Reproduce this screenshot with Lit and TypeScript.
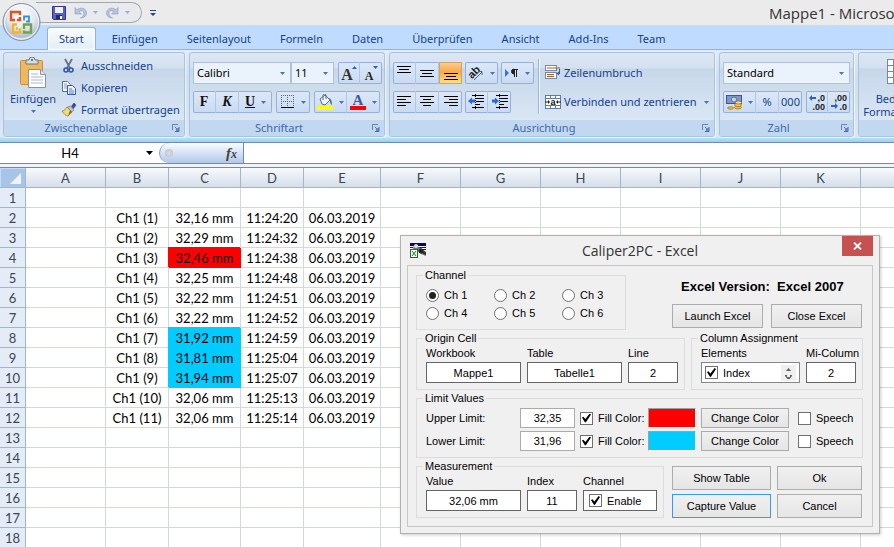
import { LitElement, html, svg, css, nothing, TemplateResult } from "lit";
import { customElement, property } from "lit/decorators.js";
import { classMap } from "lit/directives/class-map.js";

/* ---------- icon drawings ---------- */

const icon = (w: number, h: number, body: unknown) =>
  html`<svg width=${w} height=${h} viewBox="0 0 ${w} ${h}" aria-hidden="true">${body}</svg>`;

const lines = (rows: number[][], width = 16, height = 16) =>
  icon(width, height, rows.map(([x, y, w]) => svg`<rect x=${x} y=${y} width=${w} height="1" fill="#000"/>`));

const arrow = html`<svg class="arrow" width="5" height="3" viewBox="0 0 5 3" aria-hidden="true"><path d="M0 0h5L2.5 3z" fill="#4a74ad"/></svg>`;

const orb = icon(42, 42, svg`
  <defs>
    <radialGradient id="orb" cx="50%" cy="30%" r="75%">
      <stop offset="0" stop-color="#fff"/><stop offset=".5" stop-color="#e3e7ee"/><stop offset=".8" stop-color="#b4bfd0"/><stop offset="1" stop-color="#f4f8fc"/>
    </radialGradient>
  </defs>
  <circle cx="21.500" cy="22" r="18.500" fill="url(#orb)" stroke="#7d8ba3" stroke-width="1"/>
  <circle cx="21.500" cy="22" r="17" fill="none" stroke="#fff" stroke-opacity=".8"/>
  <g fill="none" stroke-width="2.400">
    <path d="M15 20h-4v-8h9v3M20 17v3h-3" stroke="#e2521a"/>
    <path d="M24 20.500v-4h5v5h-3" stroke="#3f8fd4" stroke-width="1.800"/>
    <path d="M17 24.500h-4v8h7v-4M16 28.500h2" stroke="#f5b51e"/>
    <path d="M24 29v-4.500h7v8h-7v-2" stroke="#6aa93c"/>
  </g>`);

const save = icon(14, 14, svg`
  <path d="M.5.5h13v13h-12l-1-1z" fill="#5a5fc4" stroke="#33348e"/>
  <rect x="3" y="1" width="8" height="6" fill="#eef0ff"/>
  <rect x="4" y="9" width="6" height="4" fill="#26276e"/><rect x="8" y="10" width="2" height="3" fill="#fff"/>`);

const undo = icon(13, 13, svg`<path d="M1 1.500v6.500h6.500L5 5.700c3-2 5-1 5 1.800 0 2-1.500 3.500-3.500 4.500 3.500 0 6-2 6-5C12.500 2.500 7 .5 3 3.700z" fill="#b9c4d9" stroke="#93a4c4" stroke-width=".7"/>`);
const redo = icon(13, 13, svg`<path d="M12 1.500v6.500H5.500L8 5.700c-3-2-5-1-5 1.800 0 2 1.500 3.500 3.500 4.500-3.500 0-6-2-6-5C.5 2.500 6 .5 10 3.700z" fill="#b9c4d9" stroke="#93a4c4" stroke-width=".7"/>`);
const customise = icon(6, 6, svg`<path d="M0 0h6v1H0zM0 3h6L3 6z" fill="#24468b"/>`);

const paste = icon(28, 32, svg`
  <rect x="1.500" y="3.500" width="22" height="24" rx="1" fill="#eeb95c" stroke="#c98f35"/>
  <path d="M7 3h3a3 3 0 0 1 6 0h3v4H7z" fill="#d9dde3" stroke="#6d7480"/>
  <circle cx="13" cy="3" r="1" fill="#555"/>
  <path d="M9.500 12.500h12l5 5v13h-17z" fill="#fff" stroke="#8291ad"/>
  <path d="M21.500 12.500v5h5" fill="#dce5f3" stroke="#8291ad"/>
  <path d="M12 17h7M12 20h12M12 23h12M12 26h12" stroke="#a9b7d1"/>`);

const cut = icon(16, 16, svg`
  <path d="M4 1l5 9M11 1L6 10" stroke="#62748f" stroke-width="1.800" fill="none"/>
  <circle cx="5" cy="12" r="2" fill="none" stroke="#2d56a8" stroke-width="1.600"/>
  <circle cx="10" cy="12" r="2" fill="none" stroke="#2d56a8" stroke-width="1.600"/>`);

const copy = icon(16, 16, svg`
  <path d="M1.500 1.500h5l3 3v7h-8z" fill="#fff" stroke="#4e6fae"/>
  <path d="M3 4h3M3 6h4M3 8h4" stroke="#7394cf"/>
  <path d="M6.500 5.500h5l3 3v6h-8z" fill="#e6efff" stroke="#3a5b9f"/>
  <path d="M8 9h3M8 11h5M8 13h5" stroke="#5b80c4"/>`);

const brush = icon(16, 16, svg`
  <path d="M10 5l3-4 2 2-3 4z" fill="#3b4d94" stroke="#2b376f" stroke-width=".6"/>
  <path d="M6 5l4-1 3 4-2 2z" fill="#b8c2d4" stroke="#6a7690" stroke-width=".6"/>
  <path d="M6 5l5 5-4 4c-2 0-4-2-6-5 2 0 4-2 5-4z" fill="#eddc7c" stroke="#9d7b21" stroke-width=".8"/>
  <path d="M7 14l4-4-2-2z" fill="#9b6a1d"/>`);

const launcher = icon(8, 8, svg`
  <path d="M.5 6V.5H6" fill="none" stroke="#6785b5"/><path d="M3 3l3 3M7 3v4.500H3" fill="none" stroke="#4a6ba3"/><rect x="4" y="4" width="3" height="3" fill="#6785b5"/>`);

const borders = icon(14, 14, svg`
  <path d="M0 .5h13M0 6.500h13M.5 0v12M6.500 0v12M12.500 0v12" stroke="#5b6270" stroke-dasharray="1 1"/><path d="M0 12.500h13" stroke="#000"/>`);

const fill = icon(16, 16, svg`
  <path d="M3 5l5-4 5 5-5 5-3-1z" fill="#f0f3f8" stroke="#566b8f"/>
  <path d="M6 6V1.500a1.500 1.500 0 0 1 3 0V5" fill="none" stroke="#566b8f"/>
  <path d="M11 4c3 0 4 3 4 7-2-1-2-3-2-5z" fill="#3d6cb3"/>
  <rect x="0" y="12" width="16" height="4" fill="#ff0"/>`);

const fontColor = icon(16, 16, svg`
  <text x="8" y="11" text-anchor="middle" font-family="Liberation Serif, serif" font-weight="700" font-size="15" fill="#3c5c9c">A</text>
  <rect x="0" y="12" width="16" height="4" fill="red"/>`);

const grow = icon(18, 18, svg`
  <text x="7" y="16" text-anchor="middle" font-family="Liberation Serif, serif" font-weight="700" font-size="16" fill="#333">A</text>
  <path d="M12 5l2.500-3L17 5z" fill="#2f5fb3"/>`);
const shrink = icon(18, 18, svg`
  <text x="7" y="16" text-anchor="middle" font-family="Liberation Serif, serif" font-weight="700" font-size="12" fill="#222">A</text>
  <path d="M11 2h5l-2.500 3z" fill="#2f5fb3"/>`);

const orient = icon(16, 16, svg`
  <text x="0" y="11" transform="rotate(-45 6 8)" font-family="Liberation Sans, sans-serif" font-weight="700" font-size="11" fill="#222">ab</text>
  <path d="M6 15l8-8M14 10V6.500h-3.500" fill="none" stroke="#5a6474"/>`);
const direction = icon(14, 12, svg`
  <path d="M0 2l4 4-4 4z" fill="#3b74d8"/>
  <path d="M8 2.500h5M9.500 2v8M11.500 2v8" stroke="#222"/><path d="M9 2a2.500 2.500 0 0 0 0 5z" fill="#222" stroke="#222"/>`);

const outdent = icon(16, 16, svg`
  <path d="M4 1.500h12M8 4.500h8M8 7.500h8M8 10.500h4M4 13.500h12" stroke="#000"/><path d="M7.500 0v16" stroke="#000" stroke-dasharray="1 1"/>
  <path d="M0 7l4-3.500v2h3v3H4v2z" fill="#2f69d0"/>`);
const indent = icon(16, 16, svg`
  <path d="M4 1.500h12M8 4.500h8M8 7.500h8M8 10.500h4M4 13.500h12" stroke="#000"/><path d="M7.500 0v16" stroke="#000" stroke-dasharray="1 1"/>
  <path d="M7 7L3 3.500v2H0v3h3v2z" fill="#2f69d0"/>`);

const wrap = icon(16, 16, svg`
  <rect x=".5" y=".5" width="11" height="5" fill="#fff" stroke="#7787a6"/>
  <rect x=".5" y="7.500" width="11" height="6" fill="#fff" stroke="#7787a6"/>
  <path d="M2 3h13M2 9.500h7M2 11.500h7" stroke="#a0612c"/>
  <path d="M14.500 4v4" stroke="#3a5f9f"/><path d="M12 8.500h3" stroke="#3a5f9f"/><path d="M14 6.500v4l-2.500-2z" fill="#3a5f9f"/>`);
const merge = icon(16, 16, svg`
  <rect x=".5" y="1.500" width="15" height="13" fill="#fff" stroke="#5f7aa8"/>
  <path d="M1 4.500h14M1 11.500h14M5.500 2v3M10.500 2v3M5.500 12v3M10.500 12v3" stroke="#5f7aa8"/>
  <path d="M0 8h4M12 8h4" stroke="#222"/><path d="M3 6l2 2-2 2zM13 6l-2 2 2 2z" fill="#222"/>
  <text x="8" y="11" text-anchor="middle" font-family="Liberation Sans, sans-serif" font-weight="700" font-size="9" fill="#111">a</text>`);

const money = icon(16, 16, svg`
  <rect x=".5" y="1.500" width="15" height="8" fill="#7f97c6" stroke="#3c578f"/>
  <circle cx="8" cy="5.500" r="2.500" fill="#c5d2ec" stroke="#3c578f" stroke-width=".7"/>
  <ellipse cx="12" cy="13.500" rx="3.500" ry="1.500" fill="#f3bb3b" stroke="#9b6a12" stroke-width=".7"/>
  <ellipse cx="12" cy="11" rx="3.500" ry="1.500" fill="#f9cf62" stroke="#9b6a12" stroke-width=".7"/>
  <ellipse cx="12.500" cy="8.500" rx="3" ry="1.500" fill="#fbdc83" stroke="#9b6a12" stroke-width=".7"/>
  <ellipse cx="4.500" cy="14" rx="3" ry="1.300" fill="#f3bb3b" stroke="#9b6a12" stroke-width=".7"/>`);

const decimals = (top: string, bottom: string, more: boolean) => icon(16, 16, svg`
  <text x="16" y="7" text-anchor="end" font-family="Liberation Sans, sans-serif" font-weight="700" font-size="9" fill="#222">${top}</text>
  <text x="16" y="16" text-anchor="end" font-family="Liberation Sans, sans-serif" font-weight="700" font-size="9" fill="#222">${bottom}</text>
  ${more
    ? svg`<path d="M0 4l3-3v2h4v2H3v2z" fill="#2f5fc0"/>`
    : svg`<path d="M7 12L4 9v2H0v2h4v2z" fill="#2f5fc0"/>`}`);

const condFormat = icon(24, 26, svg`
  <rect x=".5" y=".5" width="23" height="24" fill="#fff" stroke="#7686a8"/>
  <path d="M1 6.500h22M1 12.500h22M1 18.500h22M6.500 0v24" stroke="#7686a8"/>
  <rect x="7" y="1" width="10" height="5" fill="#d9483b"/><rect x="7" y="7" width="7" height="5" fill="#4c74cf"/>
  <rect x="7" y="13" width="10" height="5" fill="#d9483b"/><rect x="7" y="19" width="5" height="5" fill="#4c74cf"/>`);

const caliper = icon(16, 15, svg`
  <rect width="16" height="3" fill="#06066e"/><rect y="3" width="16" height="8" fill="#f4f4f4"/>
  <path d="M8 4.500h8M9 6.500h7M0 4.500h3" stroke="#222"/>
  <path d="M4 2l4 2 3 1 5 4v4l-5-2-4-4-4-1z" fill="#777"/><circle cx="11" cy="8" r="2.500" fill="#222"/><circle cx="6" cy="3" r="2" fill="#ddd"/><path d="M13 8l3 1v3l-3-1z" fill="#333"/>
  <rect x=".5" y="6.500" width="7" height="8" fill="#fff" stroke="#0b7a25"/>
  <path d="M2 8l4 5M6 8l-4 5" stroke="#0b7a25"/>`);

const closeCross = icon(9, 8, svg`<path d="M1 .5l7 7M8 .5l-7 7" stroke="#fff" stroke-width="1.800"/>`);

/* ---------- ribbon ---------- */

@customElement("ribbon-group")
class RibbonGroup extends LitElement {
  @property() label = "";
  @property({ type: Boolean }) dialog = false;
  static styles = css`
    :host {
      display: flex;
      flex-direction: column;
      flex: none;
      box-sizing: border-box;
      border: 1px solid #a9c2de;
      border-radius: 3px;
      box-shadow: 1px 1px 0 #eef5fc;
      background: linear-gradient(#dce7f4 0, #d5e1f0 18%, #c7d7ea 19%, #d9e6f4 80%);
    }
    .body { flex: 1; display: flex; padding: 0 3px; }
    .foot {
      display: grid;
      grid-template-columns: 1fr 16px;
      align-items: center;
      height: 16px;
      background: #c1d8f0;
      color: #3e6aaa;
      text-align: center;
      border-radius: 0 0 2px 2px;
      white-space: nowrap;
    }
    button { border: 0; padding: 0; background: none; display: grid; place-items: center; }
  `;
  render() {
    return html`<div class="body"><slot></slot></div>
      <div class="foot">
        <span>${this.label}</span>
        ${this.dialog ? html`<button aria-label="${this.label} Optionen">${launcher}</button>` : nothing}
      </div>`;
  }
}

@customElement("excel-ribbon")
class ExcelRibbon extends LitElement {
  static styles = css`
    :host { display: block; color: #15428b; font: 11px/16px "Noto Sans", "Open Sans", sans-serif; }
    button { font: inherit; color: inherit; background: none; border: 0; padding: 0; margin: 0; }
    svg { display: block; flex: none; }
    .title { display: flex; align-items: center; height: 25px; background: #ebebeb; position: relative; }
    .quick {
      display: flex;
      align-items: center;
      gap: 6px;
      height: 21px;
      box-sizing: border-box;
      margin-left: 36px;
      padding: 0 11px 0 16px;
      border: 1px solid #a2a6ad;
      border-left: 0;
      border-radius: 0 11px 11px 0;
      background: #e8eaee;
    }
    .quick .pair { display: flex; align-items: center; gap: 6px; margin-left: 2px; }
    .quick .arrow { opacity: .5; }
    .more { margin-left: 8px; }
    .orb { position: absolute; left: 0; top: 0; z-index: 2; }
    .caption {
      flex: 1;
      display: flex;
      justify-content: flex-end;
      color: #333;
      font: 15px/24px "Open Sans", sans-serif;
      white-space: nowrap;
      min-width: 0;
      overflow: hidden;
    }
    .caption span { flex: 0 0 125px; min-width: 0; }
    .tabs { display: flex; gap: 3px; height: 24px; padding: 0 0 0 47px; background: #bfdbff; box-sizing: border-box; }
    .tab { padding: 3px 13px 0; white-space: nowrap; }
    .tab.on {
      margin-top: 2px;
      padding: 0 11px;
      border: 1px solid #8db2e3;
      border-bottom: 0;
      border-radius: 3px 3px 0 0;
      background: linear-gradient(#f7fbff, #e3edf9);
      box-shadow: inset 0 0 2px 1px #fff;
      position: relative;
      z-index: 1;
      margin-bottom: -1px;
    }
    .band {
      display: flex;
      gap: 4px;
      padding: 2px 3px 1px;
      height: 91px;
      box-sizing: border-box;
      border: solid #8db2e3;
      border-width: 1px 0 0;
      border-bottom: 2px solid #a5e2f4;
      background: linear-gradient(#e2ebf6, #d0dfef 30%, #dbe7f5);
      overflow: hidden;
    }
    .rows { display: flex; flex-direction: column; gap: 7px; padding: 9px 0 0; }
    .row { display: flex; gap: 3px; height: 22px; }
    .set { display: flex; box-shadow: inset 0 0 0 1px #94b1db; border-radius: 2px; background: linear-gradient(#dce8f8, #c9dbf2); }
    .set button { display: flex; align-items: center; justify-content: center; gap: 6px; width: 23px; border-right: 1px solid #b0c8e8; }
    .set button:last-child { border-right: 0; }
    .set .w33 { width: 33px; }
    .set .w34 { width: 34px; }
    .set .narrow { width: 22px; }
    .set .on { background: linear-gradient(#fbd09a, #fba843 45%, #ffe58b); box-shadow: inset 0 0 0 1px #c9a66c; }
    .biu { font: bold 14px/16px "Liberation Serif", serif; color: #111; }
    .combo { display: grid; box-sizing: border-box; border: 1px solid #abc1de; background: #eaf2fb; align-items: center; }
    .combo + .combo { margin-left: -4px; }
    .combo > * { grid-area: 1 / 1; }
    .combo .arrow { justify-self: end; margin-right: 5px; pointer-events: none; }
    select {
      appearance: none;
      border: 0;
      background: none;
      padding: 0 3px;
      margin: 0;
      width: 100%;
      height: 20px;
      color: #000;
      font: 11px/20px "Noto Sans", sans-serif;
    }
    .c-font { width: 98px; }
    .c-size { width: 43px; }
    .c-num { width: 127px; }
    .big { display: flex; flex-direction: column; align-items: center; width: 52px; padding-top: 4px; }
    .big .arrow { margin-top: 3px; }
    .big svg { margin-bottom: 2px; }
    .list { display: flex; flex-direction: column; gap: 6px; padding: 5px 0 0 2px; }
    .item { display: flex; align-items: center; gap: 4px; white-space: nowrap; }
    .item.tight { gap: 3px; }
    .item .arrow { margin-left: 5px; }
    .rule { width: 1px; background: #9ab6dc; margin: 6px 6px 6px 4px; box-shadow: 1px 0 0 #eff6fd; }
    .rows.text { gap: 13px; padding-top: 12px; }
    .g-clip { width: 182px; }
    .g-font { width: 196px; }
    .g-align { width: 326px; }
    .g-num { width: 135px; }
    .big.cond { width: 74px; line-height: 13px; padding-top: 6px; }
    .cond svg { margin-bottom: 7px; }
    .row.wide { gap: 4px; }
  `;

  private tabs = ["Start", "Einfügen", "Seitenlayout", "Formeln", "Daten", "Überprüfen", "Ansicht", "Add-Ins", "Team"];

  private tool(name: string, content: TemplateResult, drop = false, cls = "") {
    return html`<button class=${cls || (drop ? "w33" : "")} aria-label=${name}>${content}${drop ? arrow : nothing}</button>`;
  }

  render() {
    return html`
      <div class="title">
        <button class="orb" aria-label="Office">${orb}</button>
        <div class="quick">
          <button aria-label="Speichern">${save}</button>
          <span class="pair"><button aria-label="Rückgängig">${undo}</button>${arrow}</span>
          <span class="pair"><button aria-label="Wiederholen">${redo}</button>${arrow}</span>
        </div>
        <button class="more" aria-label="Anpassen">${customise}</button>
        <div class="caption"><span>Mappe1 - Microsoft Excel</span></div>
      </div>
      <nav class="tabs">
        ${this.tabs.map((t, i) => html`<button class=${classMap({ tab: true, on: i === 0 })}>${t}</button>`)}
      </nav>
      <div class="band">
        <ribbon-group class="g-clip" label="Zwischenablage" dialog>
          <button class="big">${paste}Einfügen${arrow}</button>
          <div class="list">
            <button class="item">${cut}Ausschneiden</button>
            <button class="item">${copy}Kopieren</button>
            <button class="item">${brush}Format übertragen</button>
          </div>
        </ribbon-group>

        <ribbon-group class="g-font" label="Schriftart" dialog>
          <div class="rows">
            <div class="row wide">
              <div class="combo c-font"><select aria-label="Schriftart"><option>Calibri</option></select>${arrow}</div>
              <div class="combo c-size"><select aria-label="Schriftgrad"><option>11</option></select>${arrow}</div>
              <div class="set">${this.tool("Vergrößern", grow, false, "narrow")}${this.tool("Verkleinern", shrink, false, "narrow")}</div>
            </div>
            <div class="row wide">
              <div class="set biu">
                <button>F</button><button><i>K</i></button>
                <button class="w33"><u>U</u>${arrow}</button>
              </div>
              <div class="set">${this.tool("Rahmen", borders, true, "w34")}</div>
              <div class="set">${this.tool("Füllfarbe", fill, true)}${this.tool("Schriftfarbe", fontColor, true)}</div>
            </div>
          </div>
        </ribbon-group>

        <ribbon-group class="g-align" label="Ausrichtung" dialog>
          <div class="rows">
            <div class="row">
              <div class="set">
                ${this.tool("Oben", lines([[1, 1, 14], [3, 4, 10], [1, 7, 14]]))}
                ${this.tool("Mitte", lines([[1, 5, 14], [3, 8, 10], [1, 11, 14]]))}
                ${this.tool("Unten", lines([[1, 8, 14], [3, 11, 10], [1, 14, 14]]), false, "on")}
              </div>
              <div class="set">${this.tool("Drehen", orient, true)}</div>
              <div class="set">${this.tool("Textrichtung", direction, true)}</div>
            </div>
            <div class="row">
              <div class="set">
                ${this.tool("Links", lines([[1, 2, 14], [1, 5, 9], [1, 8, 14], [1, 11, 9]]))}
                ${this.tool("Zentriert", lines([[1, 2, 14], [4, 5, 8], [1, 8, 14], [4, 11, 8]]))}
                ${this.tool("Rechts", lines([[1, 2, 14], [6, 5, 9], [1, 8, 14], [6, 11, 9]]))}
              </div>
              <div class="set">${this.tool("Einzug verkleinern", outdent)}${this.tool("Einzug vergrößern", indent)}</div>
            </div>
          </div>
          <span class="rule"></span>
          <div class="rows text">
            <button class="item tight">${wrap}Zeilenumbruch</button>
            <button class="item tight">${merge}Verbinden und zentrieren${arrow}</button>
          </div>
        </ribbon-group>

        <ribbon-group class="g-num" label="Zahl" dialog>
          <div class="rows">
            <div class="row">
              <div class="combo c-num"><select aria-label="Zahlenformat"><option>Standard</option></select>${arrow}</div>
            </div>
            <div class="row wide">
              <div class="set">${this.tool("Währung", money, true)}<button>%</button><button>000</button></div>
              <div class="set">
                ${this.tool("Dezimalstelle hinzufügen", decimals(",0", ",00", true), false, "narrow")}
                ${this.tool("Dezimalstelle löschen", decimals(",00", ",0", false), false, "narrow")}
              </div>
            </div>
          </div>
        </ribbon-group>

        <ribbon-group label="">
          <button class="big cond">${condFormat}<span>Bedingte Formatierung</span></button>
        </ribbon-group>
      </div>
    `;
  }
}

/* ---------- worksheet ---------- */

interface Entry { ch: string; value: string; time: string; flag?: "over" | "under" }

const entries: Entry[] = [
  { ch: "Ch1 (1)", value: "32,16 mm", time: "11:24:20" },
  { ch: "Ch1 (2)", value: "32,29 mm", time: "11:24:32" },
  { ch: "Ch1 (3)", value: "32,46 mm", time: "11:24:38", flag: "over" },
  { ch: "Ch1 (4)", value: "32,25 mm", time: "11:24:48" },
  { ch: "Ch1 (5)", value: "32,22 mm", time: "11:24:51" },
  { ch: "Ch1 (6)", value: "32,22 mm", time: "11:24:52" },
  { ch: "Ch1 (7)", value: "31,92 mm", time: "11:24:59", flag: "under" },
  { ch: "Ch1 (8)", value: "31,81 mm", time: "11:25:04", flag: "under" },
  { ch: "Ch1 (9)", value: "31,94 mm", time: "11:25:07", flag: "under" },
  { ch: "Ch1 (10)", value: "32,06 mm", time: "11:25:13" },
  { ch: "Ch1 (11)", value: "32,06 mm", time: "11:25:14" },
];

@customElement("excel-sheet")
class ExcelSheet extends LitElement {
  static styles = css`
    :host { display: flex; flex-direction: column; min-height: 0; font: 13px/17px Lato, "Liberation Sans", sans-serif; color: #000; }
    .bar {
      flex: none;
      display: flex;
      height: 22px;
      box-sizing: border-box;
      margin-top: 2px;
      border: 1px solid #6a8cb8;
      border-width: 1px 0;
      background: #fff;
    }
    input { border: 0; padding: 0; margin: 0; font: inherit; background: #fff; outline: 0; min-width: 0; }
    .name { width: 140px; text-align: center; }
    .drop { width: 19px; border: 0; padding: 0; background: none; display: grid; place-items: center; }
    .fx {
      width: 85px;
      box-sizing: border-box;
      display: flex;
      align-items: center;
      justify-content: space-between;
      padding: 0 6px 0 5px;
      border: 0;
      border-left: 1px solid #7c9fd0;
      border-right: 1px solid #6a8cb8;
      border-radius: 10px 0 0 10px;
      background: linear-gradient(#fbfcff, #b0c8ea);
      font: italic bold 15px/18px "Liberation Serif", serif;
      color: #444;
    }
    .fx small { font-size: 12px; }
    .knob { width: 8px; height: 8px; border-radius: 4px; background: radial-gradient(#dcdfe4, #b9bec8); }
    .formula { flex: 1; }
    .strip { flex: none; height: 3px; background: #eef3fa; border-bottom: 1px solid #6a8cb8; }
    .view { flex: 1; overflow: hidden; background: #fff; }
    table { border-spacing: 0; table-layout: fixed; width: 0; }
    col { width: 80px; }
    .c-head { width: 26px; }
    .c-b, .c-d { width: 63px; }
    .c-c { width: 72px; }
    .c-e { width: 77px; }
    th, td { box-sizing: border-box; height: 20px; padding: 2px 0 0; text-align: center; font-weight: 400; white-space: nowrap; }
    td { border: solid #d0d7e5; border-width: 0 1px 1px 0; }
    th { border: solid #9eb6ce; border-width: 0 1px 1px 0; color: #3c4650; background: #e4ecf7; }
    thead th { background: linear-gradient(#f8fafc, #d5deea); }
    thead .corner { background: #a9c4e9; box-shadow: inset 1px 1px 0 #c9dbf3; }
    .corner svg { display: block; margin: 0 4px 0 auto; }
    .over { background: #f00; border-color: #f00; box-shadow: -1px -1px 0 #f00; }
    .under { background: #0cf; border-color: #0cf; box-shadow: -1px -1px 0 #0cf; }
  `;
  render() {
    const cols = Array.from("ABCDEFGHIJKLMNOPQRSTUVWXYZ");
    const rows = Array.from({ length: 50 }, (_, i) => i + 1);
    return html`
      <div class="bar">
        <input class="name" aria-label="Namenfeld" value="H4" />
        <button class="drop" aria-label="Namen"><svg width="7" height="4" viewBox="0 0 7 4"><path d="M0 0h7L3.500 4z"/></svg></button>
        <button class="fx"><span class="knob"></span><span>f<small>x</small></span></button>
        <input class="formula" aria-label="Bearbeitungsleiste" />
      </div>
      <div class="strip"></div>
      <div class="view">
        <table>
          <colgroup>
            <col class="c-head" />
            ${cols.map((c) => html`<col class="c-${c.toLowerCase()}" />`)}
          </colgroup>
          <thead>
            <tr>
              <th class="corner"><svg width="12" height="12" viewBox="0 0 12 12"><path d="M12 0v11H1z" fill="#eef4fc"/></svg></th>
              ${cols.map((c) => html`<th scope="col">${c}</th>`)}
            </tr>
          </thead>
          <tbody>
            ${rows.map((n) => {
              const e = entries[n - 2];
              return html`<tr>
                <th scope="row">${n}</th>
                <td></td>
                <td>${e?.ch}</td>
                <td class=${e?.flag ?? ""}>${e?.value}</td>
                <td>${e?.time}</td>
                <td>${e ? "06.03.2019" : nothing}</td>
                ${cols.slice(5).map(() => html`<td></td>`)}
              </tr>`;
            })}
          </tbody>
        </table>
      </div>
    `;
  }
}

/* ---------- Caliper2PC window ---------- */

@customElement("caliper-dialog")
class CaliperDialog extends LitElement {
  static styles = css`
    :host {
      display: flex;
      flex-direction: column;
      box-sizing: border-box;
      width: 480px;
      border: 1px solid #b0b0b0;
      box-shadow: 1px 1px 3px rgba(0, 0, 0, .2);
      background: #f0f0f0;
      padding: 0 6px 6px;
      color: #000;
      font: 11px/14px "Liberation Sans", Arial, sans-serif;
    }
    header { display: grid; grid-template-columns: 34px 1fr 34px; height: 29px; align-items: center; }
    header svg { margin-left: 3px; }
    h1 { margin: 0; text-align: center; font: 14px/28px "Open Sans", sans-serif; color: #333; }
    .close { width: 31px; height: 20px; border: 0; padding: 0; background: #c75050; display: grid; place-items: center; align-self: start; justify-self: end; }
    .close svg { margin: 0; }
    main { border: 1px solid #c6c6c6; padding: 3px 9px 8px 8px; display: flex; flex-direction: column; gap: 2px; }
    .line { display: flex; gap: 6px; justify-content: space-between; }
    fieldset { margin: 0; border: 1px solid #dcdcdc; padding: 0 6px 6px; min-width: 0; }
    legend { padding: 0 2px; height: 13px; line-height: 13px; }
    .channels { display: grid; grid-template-columns: repeat(3, 68px); grid-auto-rows: 18px; align-items: center; padding: 4px 0 1px 3px; margin-right: -11px; }
    .channels label, .check { display: flex; align-items: center; gap: 5px; }
    .fields { display: flex; gap: 6px; padding: 1px 0 0 3px; }
    .field { display: flex; flex-direction: column; gap: 2px; white-space: nowrap; }
    .w95 { width: 95px; }
    .w50 { width: 50px; }
    .w74 { width: 74px; }
    .w99 { width: 99px; }
    .box { box-sizing: border-box; height: 21px; border: 1px solid #646464; border-radius: 0; background: #fff; margin: 0; padding: 0 6px; font: inherit; text-align: center; color: #000; }
    .w99.box, .w74.box { padding: 0 3px; display: flex; align-items: center; text-align: left; }
    .w74.box { padding-left: 5px; }
    .w99.box { border-color: #828790; }
    .spin { margin-left: auto; width: 15px; height: 16px; background: #f0f0f0; display: grid; place-items: center; border: 0; padding: 0; }
    .box.limit { width: 55px; height: 20px; border-color: #ababab; }
    input[type="radio"], input[type="checkbox"] { appearance: none; box-sizing: border-box; width: 13px; height: 13px; margin: 0; border: 1px solid #707070; background: #fff; display: grid; place-items: center; flex: none; }
    input[type="radio"] { border-radius: 7px; }
    input[type="radio"]:checked::before { content: ""; width: 7px; height: 7px; border-radius: 4px; background: #222; }
    input[type="checkbox"]:checked::before { content: ""; width: 9px; height: 9px; background: #000; clip-path: polygon(0 45%, 15% 35%, 38% 62%, 85% 0, 100% 12%, 42% 100%, 30% 95%); }
    .side { display: flex; flex-direction: column; justify-content: flex-end; gap: 4px; }
    .side.top { gap: 9px; padding-bottom: 2px; }
    .version { padding-left: 9px; font: bold 13px/17px "Liberation Sans", Arial, sans-serif; white-space: pre; }
    .pair { display: flex; gap: 8px; padding-right: 1px; }
    .side:not(.top) .pair { gap: 6px; }
    .btn { box-sizing: border-box; height: 24px; margin: 0; padding: 0; border: 1px solid #acacac; background: linear-gradient(#f0f0f0, #e5e5e5); font: inherit; color: #000; }
    .w91 { width: 91px; }
    .w85 { width: 85px; }
    .btn.focus { border-color: #3399ff; }
    .limits { display: flex; flex-direction: column; gap: 3px; padding: 3px 0 0 3px; }
    .limits .entry { display: flex; align-items: center; height: 20px; }
    .lab { width: 94px; }
    .fillc { width: 68px; margin-left: 5px; }
    .swatch { box-sizing: border-box; width: 48px; height: 20px; border: 1px solid #a0a0a0; border-right-color: #fff; border-bottom-color: #fff; padding: 0; }
    .red { background: #f00; }
    .cyan { background: #0cf; }
    .btn.change { width: 88px; height: 20px; margin: 0 9px 0 5px; }
    .full { flex: 1; }
  `;

  private limit(name: string, value: string, color: string) {
    return html`<div class="entry">
      <label class="lab" for=${color}>${name}</label>
      <input class="box limit" id=${color} value=${value} />
      <label class="check fillc"><input type="checkbox" checked />Fill Color:</label>
      <button class="swatch ${color}" aria-label="${name} color"></button>
      <button class="btn change">Change Color</button>
      <label class="check"><input type="checkbox" />Speech</label>
    </div>`;
  }

  private field(name: string, value: string, width: string) {
    return html`<label class="field ${width}">${name}<input class="box ${width}" value=${value} /></label>`;
  }

  render() {
    return html`
      <header>${caliper}<h1>Caliper2PC - Excel</h1><button class="close" aria-label="Close">${closeCross}</button></header>
      <main>
        <div class="line">
          <fieldset>
            <legend>Channel</legend>
            <div class="channels">
              ${[1, 2, 3, 4, 5, 6].map((n) => html`<label><input type="radio" name="ch" ?checked=${n === 1} />Ch ${n}</label>`)}
            </div>
          </fieldset>
          <div class="side top">
            <div class="version">Excel Version:  Excel 2007</div>
            <div class="pair"><button class="btn w91">Launch Excel</button><button class="btn w91">Close Excel</button></div>
          </div>
        </div>
        <div class="line">
          <fieldset>
            <legend>Origin Cell</legend>
            <div class="fields">
              ${this.field("Workbook", "Mappe1", "w95")}${this.field("Table", "Tabelle1", "w95")}${this.field("Line", "2", "w50")}
            </div>
          </fieldset>
          <fieldset>
            <legend>Column Assignment</legend>
            <div class="fields">
              <div class="field">
                <span>Elements</span>
                <div class="box w99">
                  <label class="check"><input type="checkbox" checked />Index</label>
                  <button class="spin" aria-label="Scroll"><svg width="7" height="12" viewBox="0 0 7 12"><path d="M1 4h5L3.500 1zM0 8h2v2h3V8h2v1L4.500 12h-2L0 9z" fill="#606060"/></svg></button>
                </div>
              </div>
              ${this.field("Mi-Column", "2", "w50")}
            </div>
          </fieldset>
        </div>
        <div class="line">
          <fieldset class="full">
            <legend>Limit Values</legend>
            <div class="limits">
              ${this.limit("Upper Limit:", "32,35", "red")}${this.limit("Lower Limit:", "31,96", "cyan")}
            </div>
          </fieldset>
        </div>
        <div class="line">
          <fieldset>
            <legend>Measurement</legend>
            <div class="fields">
              ${this.field("Value", "32,06 mm", "w95")}${this.field("Index", "11", "w50")}
              <div class="field">
                <span>Channel</span>
                <div class="box w74"><label class="check"><input type="checkbox" checked />Enable</label></div>
              </div>
            </div>
          </fieldset>
          <div class="side">
            <div class="pair"><button class="btn w99">Show Table</button><button class="btn w85">Ok</button></div>
            <div class="pair"><button class="btn w99 focus">Capture Value</button><button class="btn w85">Cancel</button></div>
          </div>
        </div>
      </main>
    `;
  }
}

/* ---------- desktop ---------- */

@customElement("app-root")
class AppRoot extends LitElement {
  static styles = css`
    :host { display: flex; flex-direction: column; height: 100vh; overflow: hidden; position: relative; background: #b5cce9; }
    excel-ribbon { flex: none; }
    excel-sheet { flex: 1; }
    caliper-dialog { position: absolute; left: 400px; top: 235px; }
  `;
  render() {
    return html`<excel-ribbon></excel-ribbon><excel-sheet></excel-sheet><caliper-dialog></caliper-dialog>`;
  }
}
